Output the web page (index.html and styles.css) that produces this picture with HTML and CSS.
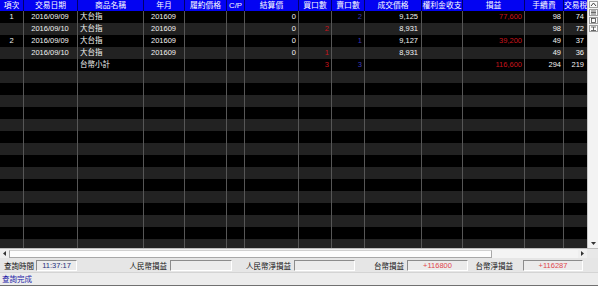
FILE: index.html
```html
<!DOCTYPE html>
<html lang="zh-Hant">
<head>
<meta charset="utf-8">
<title>查詢</title>
<link rel="stylesheet" href="styles.css">
</head>
<body>
<div class="app">
  <div class="main">
    <div class="grid">
      <div class="row head">
        <span>項次</span><span>交易日期</span><span>商品名稱</span><span>年月</span><span>履約價格</span><span>C/P</span><span>結算價</span><span>買口數</span><span>賣口數</span><span>成交價格</span><span>權利金收支</span><span>損益</span><span>手續費</span><span>交易稅</span>
      </div>
      <div class="body">
        <div class="row">
          <span>1</span><span>2016/09/09</span><span>大台指</span><span>201609</span><span></span><span></span><span>0</span><span></span><span class="blue">2</span><span>9,125</span><span></span><span class="red">77,600</span><span>98</span><span>74</span>
        </div>
        <div class="row">
          <span></span><span>2016/09/10</span><span>大台指</span><span>201609</span><span></span><span></span><span>0</span><span class="red">2</span><span></span><span>8,931</span><span></span><span></span><span>98</span><span>72</span>
        </div>
        <div class="row">
          <span>2</span><span>2016/09/09</span><span>大台指</span><span>201609</span><span></span><span></span><span>0</span><span></span><span class="blue">1</span><span>9,127</span><span></span><span class="red">39,200</span><span>49</span><span>37</span>
        </div>
        <div class="row">
          <span></span><span>2016/09/10</span><span>大台指</span><span>201609</span><span></span><span></span><span>0</span><span class="red">1</span><span></span><span>8,931</span><span></span><span></span><span>49</span><span>36</span>
        </div>
        <div class="row">
          <span></span><span></span><span>台幣小計</span><span></span><span></span><span></span><span></span><span class="red">3</span><span class="blue">3</span><span></span><span></span><span class="red">116,600</span><span>294</span><span>219</span>
        </div>
      </div>
    </div>
    <div class="vscroll">
      <div class="vbtns">
        <span class="vbtn"><svg width="7" height="5" viewBox="0 0 7 5"><path d="M1 4 L3.5 1 L6 4" fill="none" stroke="#444" stroke-width="1"/></svg></span>
        <span class="vbtn"><svg width="7" height="5" viewBox="0 0 7 5"><path d="M1 1h5M1 2.5h5M1 4h5" stroke="#444" stroke-width="0.8"/></svg></span>
        <span class="vbtn"><svg width="7" height="5" viewBox="0 0 7 5"><rect x="1.5" y="0.5" width="4" height="4" fill="none" stroke="#444" stroke-width="0.8"/></svg></span>
        <span class="vbtn"><svg width="7" height="5" viewBox="0 0 7 5"><path d="M1 1h5M3.5 1v3.5M1 4.5h5" stroke="#444" stroke-width="0.8" fill="none"/></svg></span>
      </div>
      <div class="vdown"><svg width="5" height="3" viewBox="0 0 5 3"><path d="M0 0h5L2.5 3z" fill="#333"/></svg></div>
    </div>
  </div>
  <div class="hscroll">
    <span class="harrow"><svg width="3" height="5" viewBox="0 0 3 5"><path d="M3 0v5L0 2.5z" fill="#333"/></svg></span>
    <div class="thumb"></div>
    <div class="htrack"></div>
    <span class="harrow"><svg width="3" height="5" viewBox="0 0 3 5"><path d="M0 0v5L3 2.5z" fill="#333"/></svg></span>
    <div class="corner"></div>
  </div>
  <div class="status">
    <span class="lbl first">查詢時間</span><span class="box time">11:37:17</span>
    <span class="lbl">人民幣損益</span><span class="box"></span>
    <span class="lbl">人民幣淨損益</span><span class="box"></span>
    <span class="lbl">台幣損益</span><span class="box pos">+116800</span>
    <span class="lbl wide">台幣淨損益</span><span class="box pos">+116287</span>
  </div>
  <div class="statusbar">查詢完成</div>
</div>
</body>
</html>
```

FILE: styles.css
```css
* { box-sizing: border-box; }
html, body { margin: 0; padding: 0; }
body {
  width: 598px;
  height: 286px;
  overflow: hidden;
  background: #e8e8e8;
  font-family: "Liberation Sans", "Noto Sans CJK TC", sans-serif;
  font-size: 7.5px;
}
.app {
  display: flex;
  flex-direction: column;
  width: 598px;
  height: 286px;
}
.main {
  display: flex;
  height: 248px;
}
.grid {
  width: 587px;
  height: 248px;
  background: #000;
  overflow: hidden;
}
.row {
  display: grid;
  grid-template-columns: 23px 54px 66px 41px 42px 18px 54px 33px 33px 57px 41px 62px 39px 24px;
  height: 12px;
  line-height: 12px;
  color: #f2f2f2;
  white-space: nowrap;
}
.row span {
  overflow: hidden;
  text-align: right;
  padding-right: 2px;
}
.row span:nth-child(1),
.row span:nth-child(2),
.row span:nth-child(4),
.row span:nth-child(6) { text-align: center; padding-right: 0; }
.row span:nth-child(3) { text-align: left; padding-left: 3px; padding-right: 0; }
.row span:nth-child(10) { padding-right: 3px; }
.row span:nth-child(14) { padding-right: 3px; }

.row.head {
  height: 11px;
  line-height: 11px;
  background: #0303f2;
  color: #fff;
  font-size: 7.8px;
}
.row.head span {
  text-align: center;
  padding: 0;
  border-left: 1px solid #00006a;
}
.row.head span:first-child { border-left: 0; }
.row.head span:nth-child(3) { padding-left: 0; }

.body {
  height: 237px;
  background:
    linear-gradient(#565656, #565656) 23px 0 / 1px 100% no-repeat,
    linear-gradient(#565656, #565656) 77px 0 / 1px 100% no-repeat,
    linear-gradient(#565656, #565656) 143px 0 / 1px 100% no-repeat,
    linear-gradient(#565656, #565656) 184px 0 / 1px 100% no-repeat,
    linear-gradient(#565656, #565656) 226px 0 / 1px 100% no-repeat,
    linear-gradient(#565656, #565656) 244px 0 / 1px 100% no-repeat,
    linear-gradient(#565656, #565656) 298px 0 / 1px 100% no-repeat,
    linear-gradient(#565656, #565656) 331px 0 / 1px 100% no-repeat,
    linear-gradient(#565656, #565656) 364px 0 / 1px 100% no-repeat,
    linear-gradient(#565656, #565656) 421px 0 / 1px 100% no-repeat,
    linear-gradient(#565656, #565656) 462px 0 / 1px 100% no-repeat,
    linear-gradient(#565656, #565656) 524px 0 / 1px 100% no-repeat,
    linear-gradient(#565656, #565656) 563px 0 / 1px 100% no-repeat,
    repeating-linear-gradient(#000 0 12px, #222 12px 24px);
}
.red { color: #c8141c; }
.blue { color: #3a3ab8; }

.vscroll {
  width: 11px;
  height: 248px;
  background: #f3f3f3;
  border-left: 1px solid #c8c8c8;
  display: flex;
  flex-direction: column;
  justify-content: space-between;
  align-items: center;
  padding: 1px 0 3px;
}
.vbtns {
  display: flex;
  flex-direction: column;
  gap: 1px;
}
.vbtn {
  width: 9px;
  height: 7px;
  border: 1px solid #a0a0a0;
  background: #fbfbfb;
  display: flex;
  align-items: center;
  justify-content: center;
}
.vdown { display: flex; }

.hscroll {
  display: flex;
  align-items: center;
  height: 10px;
  background: #efefef;
  border-top: 1px solid #bdbdbd;
}
.harrow {
  width: 9px;
  display: flex;
  justify-content: center;
}
.thumb {
  width: 483px;
  height: 8px;
  background: #fdfdfd;
  border: 1px solid #a8a8a8;
  border-top-color: #d0d0d0;
}
.htrack {
  flex: 1;
  height: 8px;
  background: #f4f4f4;
}
.corner {
  width: 11px;
  height: 10px;
  background: #e8e8e8;
}

.status {
  display: grid;
  grid-template-columns: 36px 41px 93px 62px 62px 61px 52px 61px 55px 60px;
  align-items: center;
  height: 14px;
  background: #e6e6e6;
  color: #111;
}
.lbl {
  text-align: right;
  padding-right: 3px;
  white-space: nowrap;
}
.lbl.first { text-align: left; padding-left: 4px; padding-right: 0; }
.lbl.wide { padding-right: 10px; }
.box {
  height: 11px;
  line-height: 9px;
  border: 1px solid;
  border-color: #8c8c8c #ffffff #ffffff #8c8c8c;
  background: #ebebeb;
  text-align: center;
}
.box.time { color: #23307c; }
.box.pos { color: #e0464c; }

.statusbar {
  height: 14px;
  line-height: 13px;
  padding-left: 2px;
  background: #ececec;
  border-top: 1px solid #d4d4d4;
  border-bottom: 1px solid #707070;
  color: #1c1ca8;
}
```
